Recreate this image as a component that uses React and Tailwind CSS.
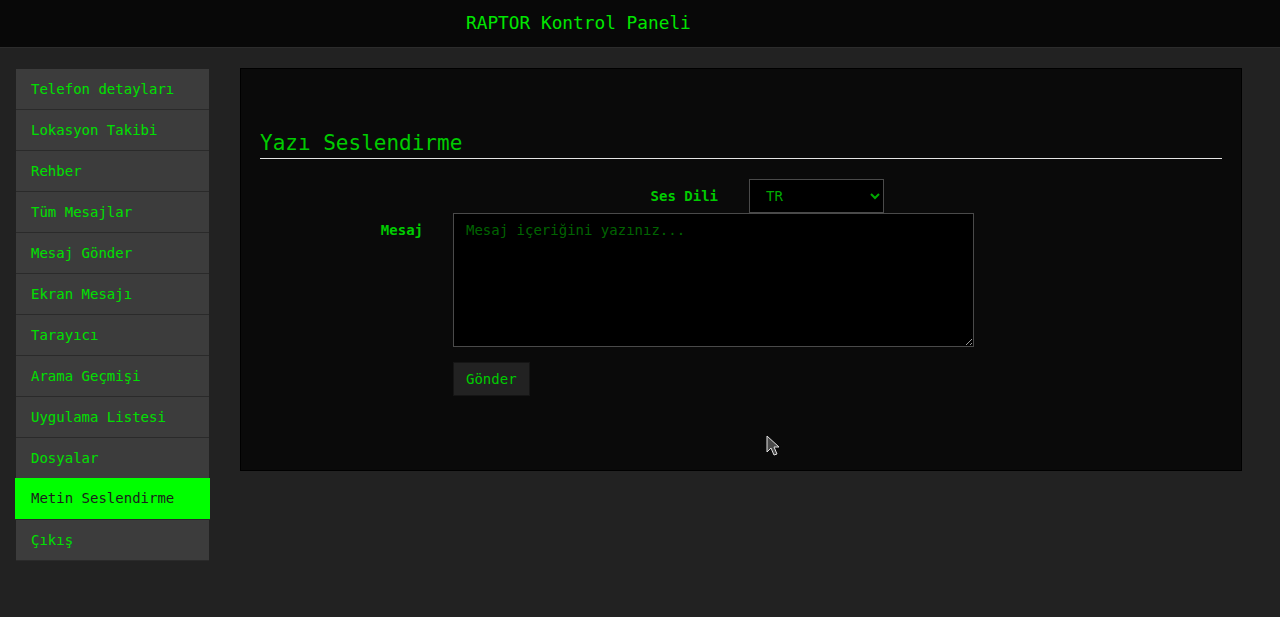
import React, { useState } from 'react';

const items = [
  'Telefon detayları',
  'Lokasyon Takibi',
  'Rehber',
  'Tüm Mesajlar',
  'Mesaj Gönder',
  'Ekran Mesajı',
  'Tarayıcı',
  'Arama Geçmişi',
  'Uygulama Listesi',
  'Dosyalar',
  'Metin Seslendirme',
  'Çıkış',
];

const App = () => {
  const [active] = useState('Metin Seslendirme');
  const [lang, setLang] = useState('TR');
  const [msg, setMsg] = useState('');

  return (
    <div className="min-h-[617px] bg-[#222222] font-['DejaVu_Sans_Mono',monospace]">
      <header className="h-[48px] bg-[#080808] border-b border-[#2c2c2c] flex items-center pl-[466px]">
        <h1 className="text-[17.8px] text-[#00e600]">RAPTOR Kontrol Paneli</h1>
      </header>

      <div className="flex items-start pt-[20px]">
        {/* Menu */}
        <nav className="ml-[16px] mt-[1px] w-[193px] flex flex-col">
          {items.map((item) => (
            <a
              key={item}
              href="#"
              className={`flex items-center text-[14px] border-b border-[#2a2a2a] ${
                item === active
                  ? 'h-[42px] -mt-[1px] bg-[#00ff00] text-[#1c1c1c] -mx-[1px] pl-[16px]'
                  : 'h-[41px] bg-[#3c3c3c] text-[#00e000] pl-[15px]'
              }`}
            >
              {item}
            </a>
          ))}
        </nav>

        {/* Panel */}
        <main className="relative ml-[31px] w-[1002px] h-[403px] bg-[#0a0a0a] border border-black px-[19px] pt-[59px]">
          <h2 className="text-[21px] leading-[30px] text-[#00cc00] border-b border-[#e5e5e5]">
            Yazı Seslendirme
          </h2>

          <div className="mt-[20px] flex items-center">
            <label className="w-[458px] text-right text-[14px] font-bold text-[#00cc00]">Ses Dili</label>
            <select
              value={lang}
              onChange={(e) => setLang(e.target.value)}
              className="ml-[31px] w-[135px] h-[34px] bg-black border border-[#4a4a4a] text-[#00aa00] text-[14px] pl-[12px] pr-[4px] outline-none"
            >
              <option>TR</option>
              <option>EN</option>
            </select>
          </div>

          <div className="flex items-start">
            <label className="w-[163px] text-right text-[14px] font-bold text-[#00cc00] pt-[7px]">Mesaj</label>
            <textarea
              value={msg}
              onChange={(e) => setMsg(e.target.value)}
              placeholder="Mesaj içeriğini yazınız..."
              className="ml-[30px] w-[521px] h-[134px] bg-black border border-[#4a4a4a] text-[#00cc00] placeholder:text-[#006400] text-[14px] px-[12px] py-[6px] outline-none"
            />
          </div>

          <button className="ml-[193px] mt-[15px] h-[34px] px-[12px] bg-[#222222] border border-[#151515] text-[#00cc00] text-[14px]">
            Gönder
          </button>

          <svg
            className="absolute left-[525px] top-[366px]"
            width="14"
            height="22"
            viewBox="0 0 14 22"
          >
            <path d="M1 1 L1 17 L5 13 L8 20 L11 19 L8 12 L13 12 Z" fill="#4a4a4a" stroke="#e0e0e0" strokeWidth="1" />
          </svg>
        </main>
      </div>
    </div>
  );
};

export default App;
